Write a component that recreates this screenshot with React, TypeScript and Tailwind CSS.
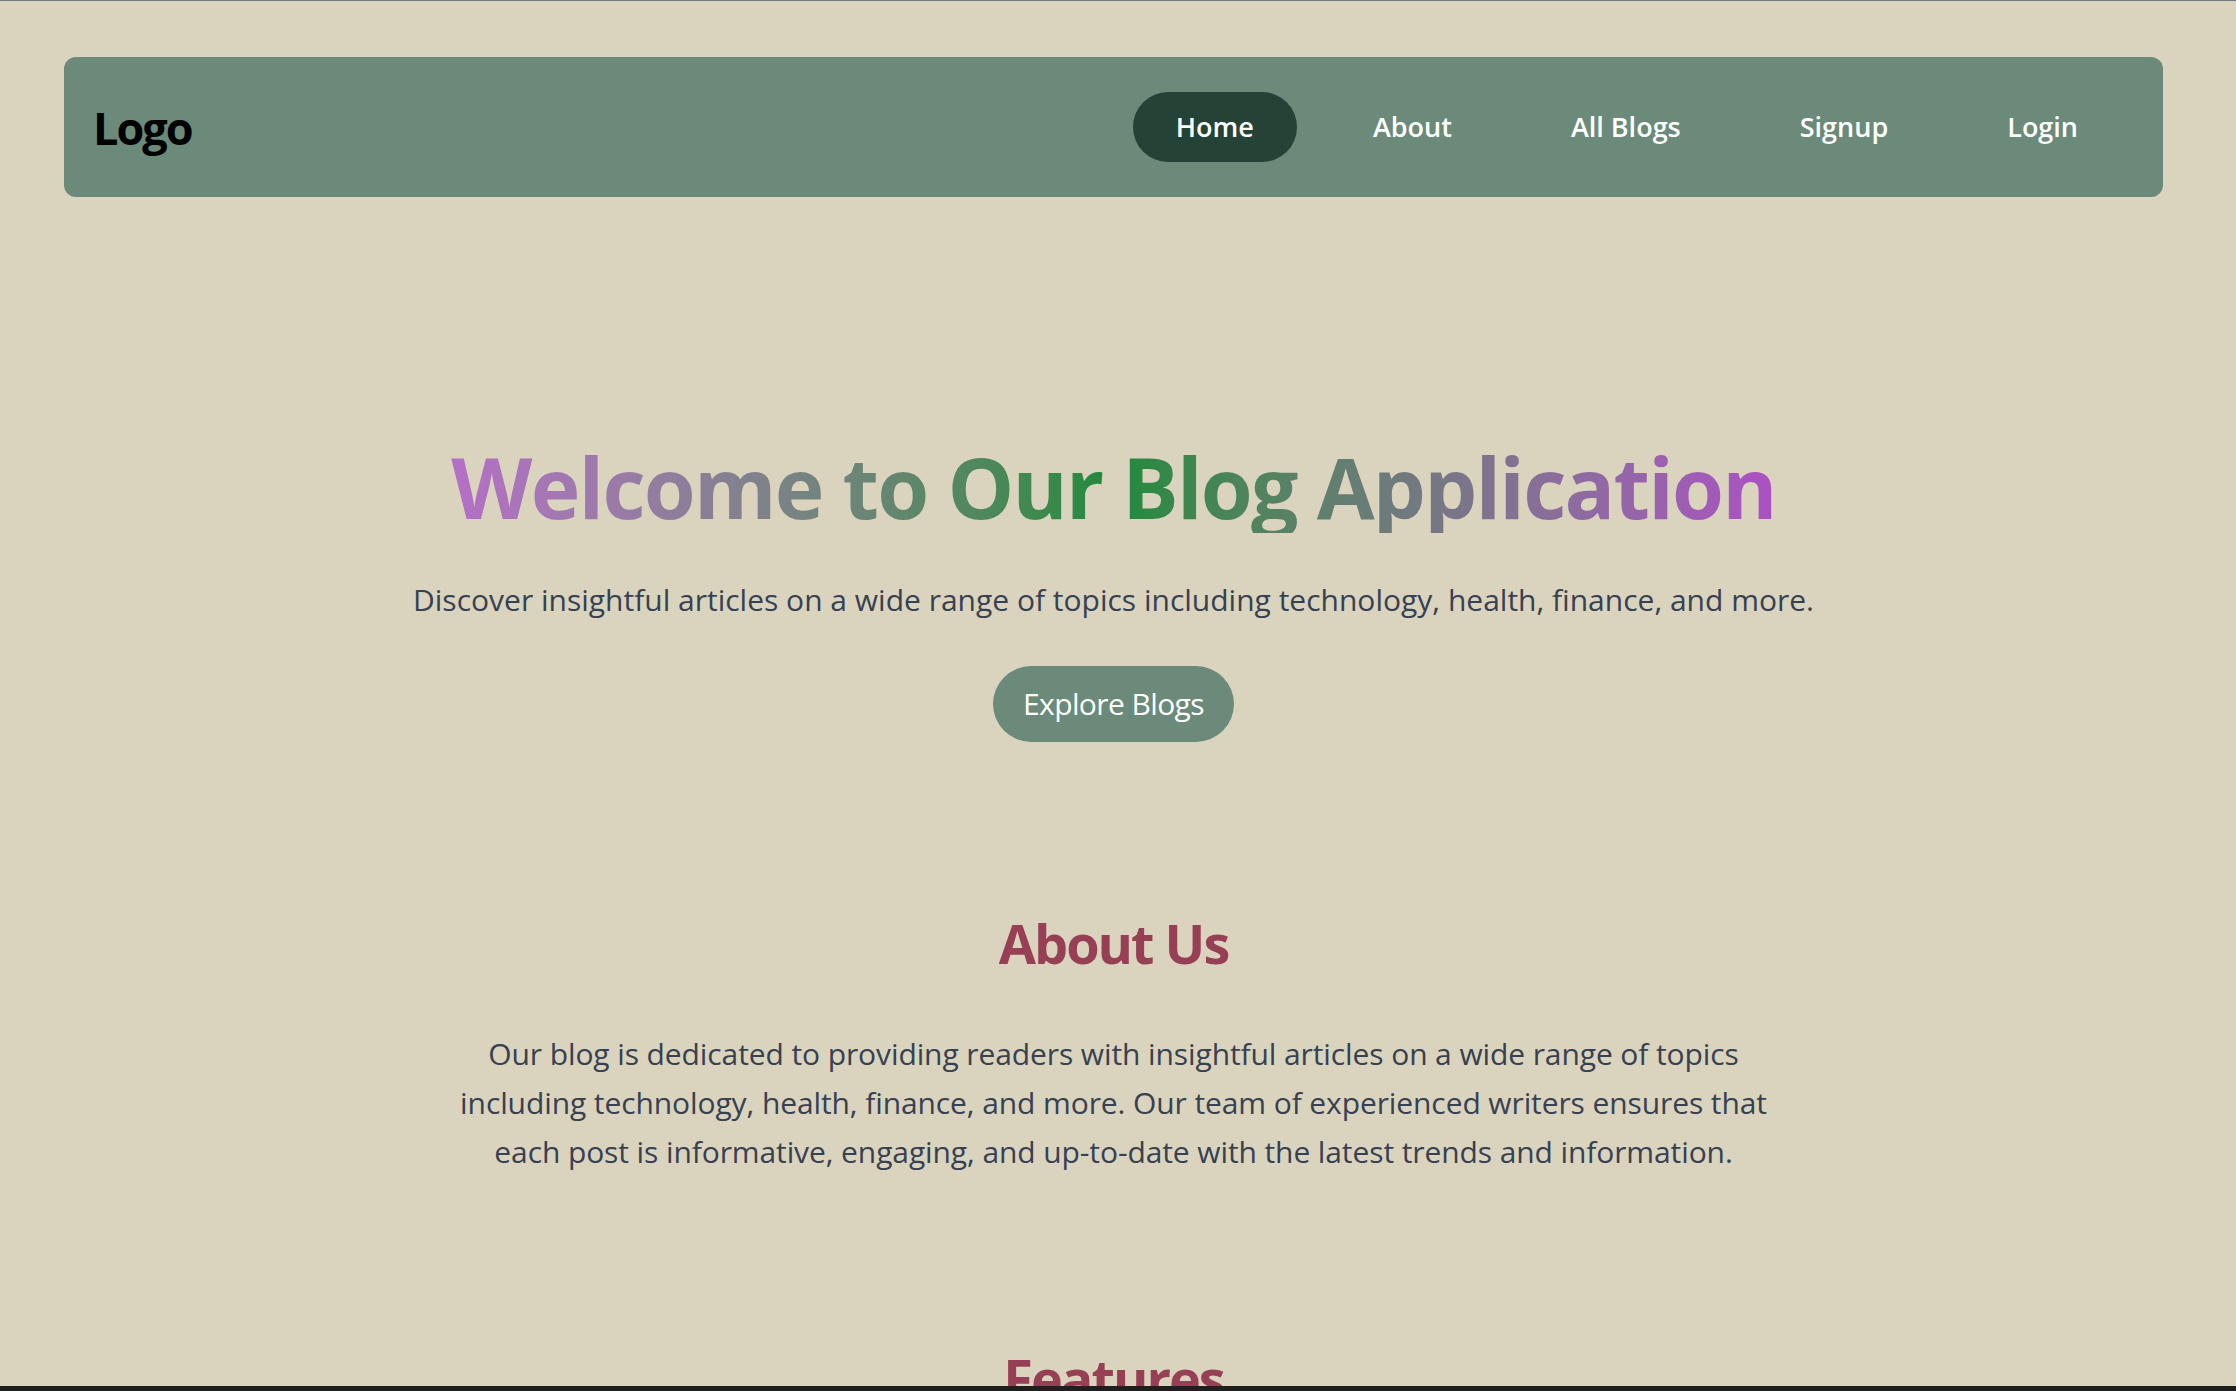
import React from "react";

const links = ["Home", "About", "All Blogs", "Signup", "Login"];

export default function App() {
  return (
    <div
      className="min-h-screen bg-[#dad4be] border-t border-[#6f7a80] pr-[9px]"
      style={{ fontFamily: '"Open Sans", "Noto Sans", sans-serif' }}
    >
      <nav className="mx-16 mt-[56px] h-[140px] rounded-[12px] bg-[#6b8a7a] flex items-center justify-between pl-[29px] pr-[42px]">
        <div className="text-[45px] font-bold text-black leading-none tracking-[-2px]">Logo</div>
        <ul className="flex items-center gap-[33px]">
          {links.map((l, i) => (
            <li key={l}>
              <a
                href="#"
                className={
                  "block px-[43px] py-[14px] rounded-full text-[27px] leading-[42px] font-semibold text-white tracking-[0px] " +
                  (i === 0 ? "bg-[#254236]" : "")
                }
              >
                {l}
              </a>
            </li>
          ))}
        </ul>
      </nav>

      <section className="flex flex-col items-center text-center pt-[248px]">
        <h1 className="text-[84px] leading-none font-bold tracking-[-1.8px] bg-gradient-to-r from-[#b56fc7] via-[#1c8a3a] to-[#ab50c4] bg-clip-text text-transparent pb-[4px]">
          Welcome to Our Blog Application
        </h1>
        <p className="mt-[46px] text-[30px] leading-[42px] text-[#374151] tracking-[0px]">
          Discover insightful articles on a wide range of topics including technology, health, finance, and more.
        </p>
        <a
          href="#"
          className="mt-[45px] px-[30px] py-[17px] rounded-full bg-[#6b8a7a] text-white text-[30px] leading-[42px] tracking-[-0.6px]"
        >
          Explore Blogs
        </a>
      </section>

      <section className="flex flex-col items-center text-center pt-[171px]">
        <h2 className="text-[54px] leading-[60px] font-bold text-[#963f55] tracking-[-2px]">About Us</h2>
        <p className="mt-[57px] max-w-[1330px] text-[30px] leading-[48.75px] text-[#374151] tracking-[-0.1px]">
          Our blog is dedicated to providing readers with insightful articles on a wide range of topics including
          technology, health, finance, and more. Our team of experienced writers ensures that each post is
          informative, engaging, and up-to-date with the latest trends and information.
        </p>
      </section>

      <section className="flex flex-col items-center text-center pt-[172px] pb-[200px]">
        <h2 className="text-[54px] leading-[60px] font-bold text-[#963f55] tracking-[-2px]">Features</h2>
      </section>

      <div className="fixed bottom-0 left-0 right-0 h-[5px] bg-[#1f1f1f]" />
    </div>
  );
}
